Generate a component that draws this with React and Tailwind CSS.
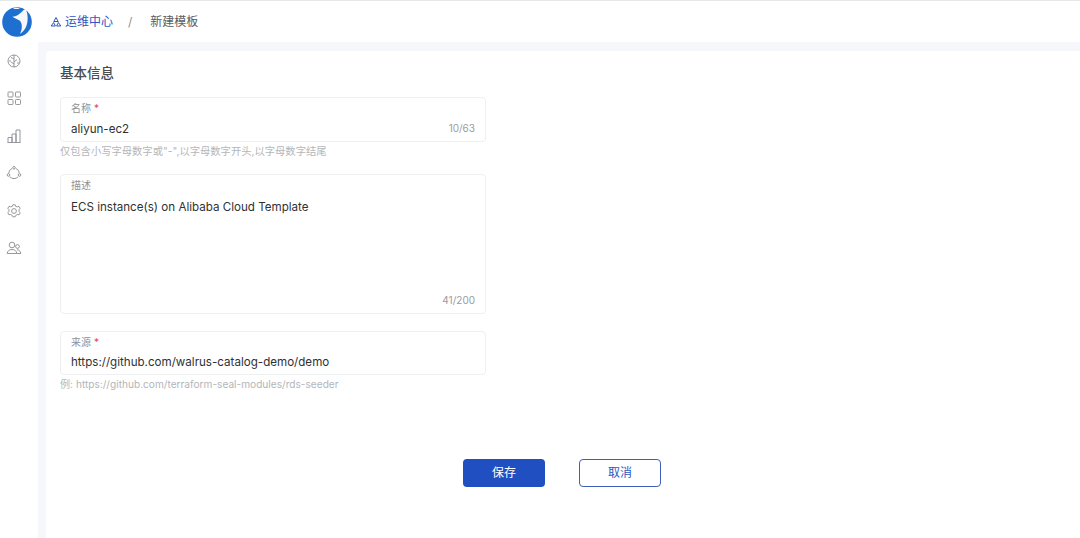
const CJK = "font-['Inter','Noto_Sans_CJK_SC',sans-serif]";

const Logo = () => (
  <svg width="30" height="30" viewBox="0 0 30 30">
    <circle cx="15" cy="15" r="14.800" fill="#1f6fd0" />
    <path d="M10.500 9.500C14 10 18 7 21 3.500L24 1.800C24.300 4 25.300 6 25.500 9C26.300 16 24 23 18 27C20.500 22 20.500 16 17.500 13.500C15 11.800 12 11.500 10.500 9.500Z" fill="#f4f8fc" />
    <path d="M11 1.200C13 .6 15.500 .6 18 1.400C16 2.400 13 2.300 11 1.200Z" fill="#f4f8fc" />
  </svg>
);

const iconProps = { width: 16, height: 16, viewBox: '0 0 16 16', fill: 'none', stroke: '#8a8d92', strokeWidth: 0.9 };

const BrainIcon = () => (
  <svg {...iconProps}>
    <circle cx="8" cy="8" r="6" />
    <path d="M8 2v12M8 6L5 4.500M8 9L11 6.500M8 11L5 9M3 8h2M11 10h2" />
  </svg>
);
const GridIcon = () => (
  <svg {...iconProps}>
    <rect x="2" y="2" width="5" height="5" rx="0.8" />
    <rect x="9.500" y="2" width="5" height="5" rx="0.8" />
    <rect x="2" y="9.500" width="5" height="5" rx="0.8" />
    <rect x="9.500" y="9.500" width="5" height="5" rx="0.8" />
  </svg>
);
const BarsIcon = () => (
  <svg {...iconProps}>
    <path d="M2 14.500V9.500h4v5M6 14.500V6h4v8.500M10 14.500V2h4v12.500M1.500 14.500h13" />
  </svg>
);
const CycleIcon = () => (
  <svg {...iconProps}>
    <circle cx="8" cy="2.800" r="1.300" />
    <circle cx="2.500" cy="10" r="1.300" />
    <circle cx="13.500" cy="10" r="1.300" />
    <path d="M6.200 3.400A5.800 5.800 0 0 0 2.600 8.400M9.800 3.400A5.800 5.800 0 0 1 13.400 8.400M3.800 11.800A5.800 5.800 0 0 0 12.200 11.800" />
  </svg>
);
const GearIcon = () => (
  <svg {...iconProps}>
    <path d="M6.800 1.800h2.400l.6 1.700 1.800.3 1.400-.5 1.200 2-1.100 1.400v1.800l1.100 1.400-1.200 2-1.400-.5-1.800.9-.6 1.500H6.800l-.6-1.500-1.800-.9-1.400.5-1.200-2 1.100-1.400V6.500L1.800 5.300l1.200-2 1.400.5 1.800-.3z" />
    <circle cx="8" cy="8" r="2.400" />
  </svg>
);
const UsersIcon = () => (
  <svg {...iconProps}>
    <circle cx="6" cy="5" r="2.800" />
    <circle cx="11.500" cy="6.500" r="1.900" />
    <path d="M1.200 13.500c.4-2.800 2.200-4 4.800-4s4.400 1.200 4.800 4zM11 9.800c2 0 3.400 1.200 3.800 3.700h-4" />
  </svg>
);

const navIcons = [BrainIcon, GridIcon, BarsIcon, CycleIcon, GearIcon, UsersIcon];

const Sidebar = () => (
  <aside className="w-[38px] shrink-0 flex flex-col bg-white">
    <div className="h-[38px] w-full flex items-center pl-[2px] pt-[3px]">
      <Logo />
    </div>
    <div className="flex flex-col gap-[21.400px] mt-[14px] pl-[6px]">
      {navIcons.map((Icon, i) => <Icon key={i} />)}
    </div>
  </aside>
);

const Field = ({ label, required, value, counter, hint, hintSize, boxHeight, valueGap }) => (
  <div>
    <div className={`relative w-[426px] rounded-[4px] border border-[#eeeff1] bg-white pl-[10px] pr-[10px] pt-[3px] ${boxHeight}`}>
      <div className="text-[10px] leading-[14px] text-[#8f9196]">
        {label}
        {required && <span className="ml-[3px] text-[#e5484d]">*</span>}
      </div>
      <div className={`text-[11.600px] leading-[16px] text-[#2f3133] ${valueGap}`}>{value}</div>
      {counter && <span className="absolute right-[10px] bottom-[6px] text-[10px] leading-[14px] text-[#9a9ca1]">{counter}</span>}
    </div>
    {hint && <div className={`mt-[2px] leading-[14px] text-[#b4b6ba] ${hintSize}`}>{hint}</div>}
  </div>
);

export default function App() {
  return (
    <div className={`h-[538px] w-[1080px] overflow-hidden flex flex-col bg-white ${CJK}`}>
      <div className="h-px bg-[#e6e7e9] shrink-0" />
      <div className="flex flex-1 min-h-0">
        <Sidebar />
        <main className="flex-1 min-w-0 flex flex-col bg-[#f5f7fa]">
          <header className="h-[41px] shrink-0 bg-white flex items-center pl-[12px] text-[12px]">
            <svg width="12" height="12" viewBox="0 0 12 12" fill="none" stroke="#2f55c0" strokeWidth="1">
              <path d="M6 1.500L8.200 5.500H3.800zM3.600 6.500L5.400 10H1.200zM8.400 6.500L10.800 10H6.600z" />
            </svg>
            <span className="ml-[3px] text-[#2f55c0]">运维中心</span>
            <span className="ml-[15px] text-[#8f9196]">/</span>
            <span className="ml-[18px] text-[#5a5c60]">新建模板</span>
          </header>
          <section className="flex-1 ml-[8px] mt-[9px] bg-white rounded-tl-[4px] pl-[14px] pr-[16px] pt-[12px]">
            <h2 className="text-[13.500px] leading-[20px] font-medium text-[#4a4c50]">基本信息</h2>
            <div className="mt-[14px] flex flex-col">
              <Field label="名称" required value="aliyun-ec2" counter="10/63" boxHeight="h-[45px]" valueGap="mt-[6px]" hintSize="text-[10.300px]" hint={'仅包含小写字母数字或"-",以字母数字开头,以字母数字结尾'} />
              <div className="mt-[16px]">
                <Field label="描述" value="ECS instance(s) on Alibaba Cloud Template" counter="41/200" boxHeight="h-[140px]" valueGap="mt-[7px]" />
              </div>
              <div className="mt-[17px]">
                <Field label="来源" required value="https://github.com/walrus-catalog-demo/demo" boxHeight="h-[44px]" valueGap="mt-[5px]" hintSize="text-[10.150px]" hint="例: https://github.com/terraform-seal-modules/rds-seeder" />
              </div>
            </div>
            <div className="mt-[68px] flex justify-center gap-[34px]">
              <button className="h-[28px] w-[82px] rounded-[4px] bg-[#1f4fc0] text-[12px] text-white">保存</button>
              <button className="h-[28px] w-[82px] rounded-[4px] border border-[#3f5fbf] bg-white text-[12px] text-[#2f55c0]">取消</button>
            </div>
          </section>
        </main>
      </div>
    </div>
  );
}
